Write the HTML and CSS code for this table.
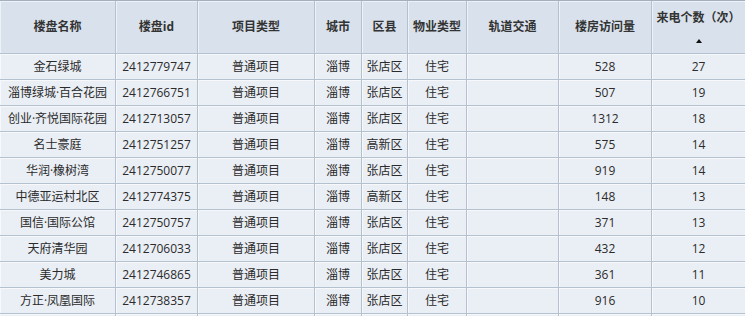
FILE: index.html
```html
<!DOCTYPE html>
<html lang="zh-CN">
<head>
<meta charset="utf-8">
<title>楼盘列表</title>
<link rel="stylesheet" href="styles.css">
</head>
<body>
<table class="grid">
  <colgroup>
    <col class="c1"><col class="c2"><col class="c3"><col class="c4"><col class="c5"><col class="c6"><col class="c7"><col class="c8"><col class="c9">
  </colgroup>
  <thead>
    <tr>
      <th>楼盘名称</th>
      <th>楼盘id</th>
      <th>项目类型</th>
      <th>城市</th>
      <th>区县</th>
      <th>物业类型</th>
      <th>轨道交通</th>
      <th>楼房访问量</th>
      <th class="sorted"><span class="th-label">来电个数（次）</span><span class="sort-up"></span></th>
    </tr>
  </thead>
  <tbody>
    <tr><td>金石绿城</td><td>2412779747</td><td>普通项目</td><td>淄博</td><td>张店区</td><td>住宅</td><td></td><td>528</td><td>27</td></tr>
    <tr><td>淄博绿城·百合花园</td><td>2412766751</td><td>普通项目</td><td>淄博</td><td>张店区</td><td>住宅</td><td></td><td>507</td><td>19</td></tr>
    <tr><td>创业·齐悦国际花园</td><td>2412713057</td><td>普通项目</td><td>淄博</td><td>张店区</td><td>住宅</td><td></td><td>1312</td><td>18</td></tr>
    <tr><td>名士豪庭</td><td>2412751257</td><td>普通项目</td><td>淄博</td><td>高新区</td><td>住宅</td><td></td><td>575</td><td>14</td></tr>
    <tr><td>华润·橡树湾</td><td>2412750077</td><td>普通项目</td><td>淄博</td><td>张店区</td><td>住宅</td><td></td><td>919</td><td>14</td></tr>
    <tr><td>中德亚运村北区</td><td>2412774375</td><td>普通项目</td><td>淄博</td><td>高新区</td><td>住宅</td><td></td><td>148</td><td>13</td></tr>
    <tr><td>国信·国际公馆</td><td>2412750757</td><td>普通项目</td><td>淄博</td><td>张店区</td><td>住宅</td><td></td><td>371</td><td>13</td></tr>
    <tr><td>天府清华园</td><td>2412706033</td><td>普通项目</td><td>淄博</td><td>张店区</td><td>住宅</td><td></td><td>432</td><td>12</td></tr>
    <tr><td>美力城</td><td>2412746865</td><td>普通项目</td><td>淄博</td><td>张店区</td><td>住宅</td><td></td><td>361</td><td>11</td></tr>
    <tr><td>方正·凤凰国际</td><td>2412738357</td><td>普通项目</td><td>淄博</td><td>张店区</td><td>住宅</td><td></td><td>916</td><td>10</td></tr>
    <tr class="peek"><td></td><td></td><td></td><td></td><td></td><td></td><td></td><td></td><td></td></tr>
  </tbody>
</table>
</body>
</html>
```
FILE: styles.css
```css
html, body {
  margin: 0;
  padding: 0;
  background: #eaeff5;
  overflow: hidden;
}

.grid {
  border-collapse: separate;
  border-spacing: 0;
  table-layout: fixed;
  width: 746px;
  border-top: 1px solid #a3afbc;
  font-family: "Open Sans", "Noto Sans CJK SC", sans-serif;
  font-size: 12px;
  color: #2b2b2b;
}

.c1 { width: 116px; }
.c2 { width: 82px; }
.c3 { width: 117px; }
.c4 { width: 47px; }
.c5 { width: 46px; }
.c6 { width: 59px; }
.c7 { width: 92px; }
.c8 { width: 93px; }
.c9 { width: 94px; }

.grid th,
.grid td {
  padding: 0;
  text-align: center;
  border-right: 1px solid #b4c2d0;
  border-bottom: 1px solid #b4c2d0;
  box-shadow: inset 1px 1px 0 rgba(255, 255, 255, 0.55);
  white-space: nowrap;
  overflow: hidden;
}

.grid th {
  height: 52px;
  background: #d9e2ec;
  font-weight: bold;
  color: #333;
  vertical-align: middle;
  line-height: 16px;
}

.grid td {
  height: 25px;
  background: #eaeff5;
  line-height: 25px;
}

.grid tr.peek td {
  height: 2px;
  line-height: 2px;
  border-bottom: 0;
}

.grid th.sorted {
  vertical-align: top;
  padding-top: 9px;
  height: 43px;
}

.th-label {
  display: block;
  line-height: 16px;
}

.sort-up {
  display: block;
  width: 0;
  height: 0;
  margin: 13px auto 0;
  border-left: 3px solid transparent;
  border-right: 3px solid transparent;
  border-bottom: 4px solid #111;
}
```
